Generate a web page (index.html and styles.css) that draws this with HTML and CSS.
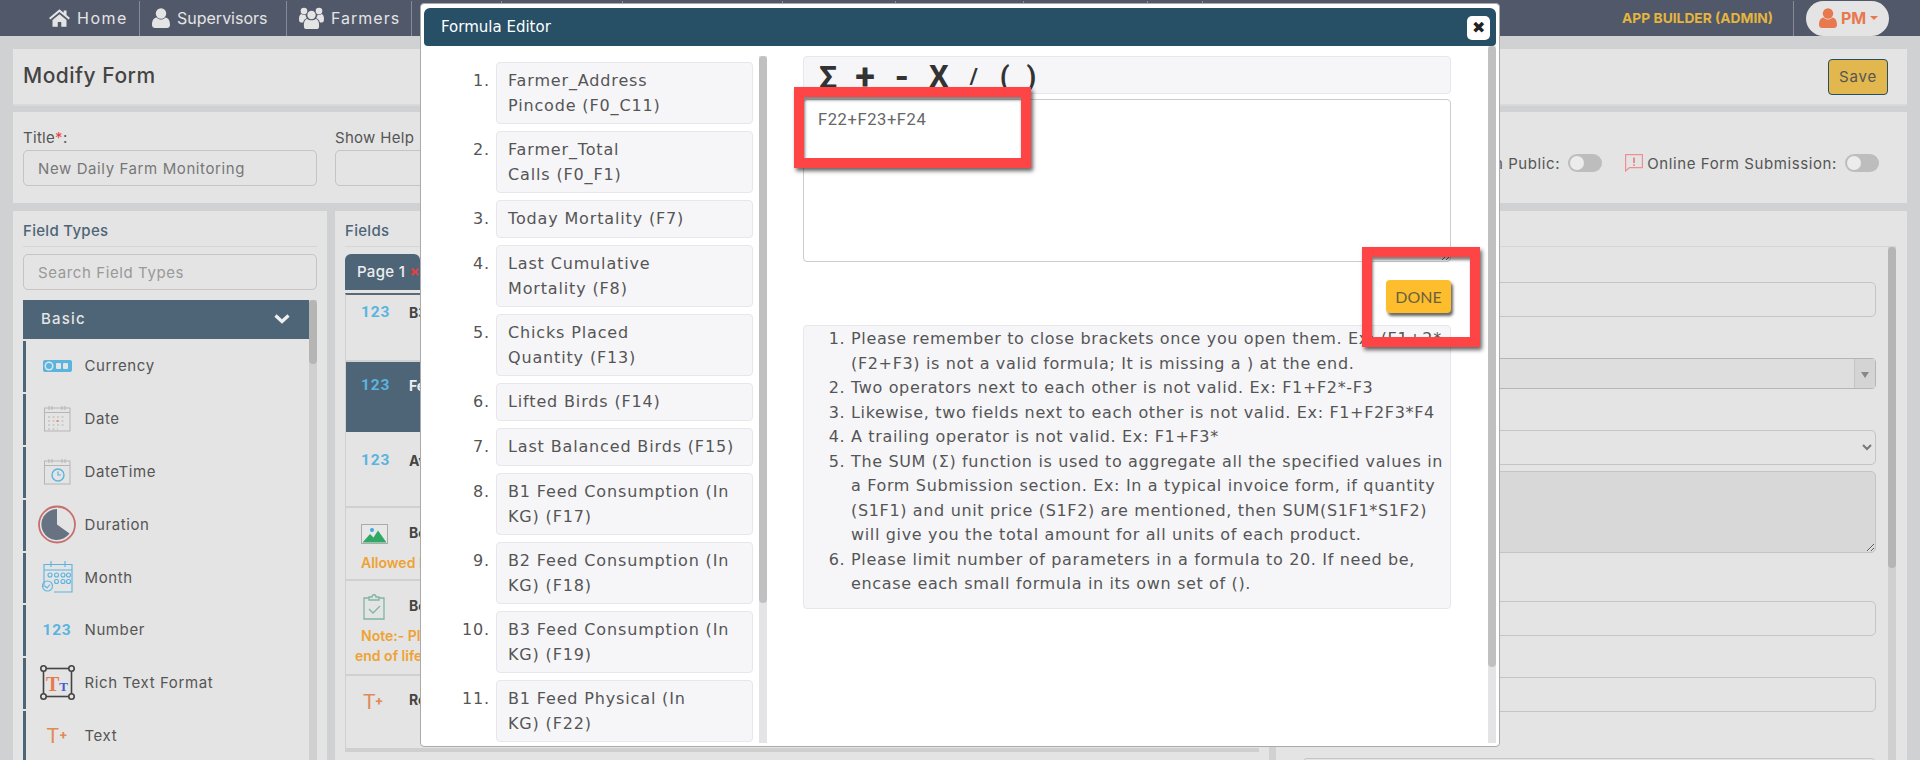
FILE: index.html
```html
<!DOCTYPE html>
<html lang="en">
  <head>
    <meta charset="UTF-8" />
    <title>Modify Form</title>
    <link rel="stylesheet" href="styles.css">
  </head>
  <body>
    <nav class="topbar">
      <a class="navItem navHome">
        <svg class="navIcon" width="21" height="18" viewBox="0 0 24 20"><path d="M12 0 0 10l1.6 1.8L12 3.2l10.4 8.6L24 10l-4-3.4V1.400h-3.200v2.500z"/><path d="M4 12.400 12 5.700l8 6.700V20h-6v-5.500h-4V20H4z"/></svg>
        Home
      </a>
      <a class="navItem navSupervisors">
        <svg class="navIcon" width="18" height="20" viewBox="0 0 18 20"><circle cx="9" cy="5.500" r="5.200"/><path d="M0 17c0-5 2-7 4.500-7.500C6 11 7.500 11.500 9 11.500s3-.5 4.500-2C16 10 18 12 18 17c0 2-1.500 3-3 3H3c-1.500 0-3-1-3-3z"/></svg>
        Supervisors
      </a>
      <a class="navItem navFarmers">
        <svg class="navIcon" width="25" height="22" viewBox="0 0 25 22"><circle cx="12.500" cy="8" r="4.200"/><circle cx="5" cy="4" r="3.300"/><circle cx="20" cy="4" r="3.300"/><path d="M5 20c-.5-5 1-7.500 3-8.300 2.500 2 6.500 2 9 0 2 .8 3.500 3.300 3 8.300-.2 1.400-1 2-2 2H7c-1 0-1.800-.6-2-2z"/><path d="M0 12c0-3 1-4.500 2.500-5 1.300 1 3 1 4 .5 0 1.500.6 2.800 1.500 3.600-2 .8-3.500 2.400-3.800 4.400H2c-1.200 0-2-1-2-3.500zM25 12c0-3-1-4.500-2.500-5-1.300 1-3 1-4 .5 0 1.500-.6 2.800-1.500 3.600 2 .8 3.500 2.400 3.800 4.400H23c1.200 0 2-1 2-3.500z"/></svg>
        Farmers
      </a>
      <span class="navItem navGap1"></span>
      <span class="navItem navGap2"></span>
      <span class="navItem navGap3"></span>
      <span class="navItem navGap4"></span>
      <span class="navItem navGap5"></span>
      <span class="navItem navGap6"></span>
      <span class="navItem navGap7"></span>
      <span class="navRole">APP BUILDER (ADMIN)</span>
      <a class="navUser">
        <svg width="18" height="20" viewBox="0 0 18 20"><circle cx="9" cy="5.500" r="5.200"/><path d="M0 17c0-5 2-7 4.500-7.500C6 11 7.500 11.500 9 11.500s3-.5 4.500-2C16 10 18 12 18 17c0 2-1.500 3-3 3H3c-1.500 0-3-1-3-3z"/></svg>
        <span>PM</span><i class="caret"></i>
      </a>
    </nav>

    <main class="page">
      <section class="card cardHead">
        <h1>Modify Form</h1>
        <button class="btnSave">Save</button>
      </section>

      <section class="card cardMeta">
        <div class="metaField">
          <label>Title<span class="req">*</span>:</label>
          <input class="input" type="text" value="New Daily Farm Monitoring" />
        </div>
        <div class="metaField">
          <label>Show Help</label>
          <input class="input" type="text" />
        </div>
        <div class="metaToggles">
          <span>Open in Public:</span><i class="toggle"></i>
          <svg class="warnIcon" width="18" height="18" viewBox="0 0 18 18"><path d="M.6 .6h16.800v13H4.500L.6 17z" fill="none" stroke="#ef8f8f" stroke-width="1.200"/><path d="M8.300 3.500h1.400v5.500H8.300zM8.300 10.200h1.400v1.500H8.300z" fill="#e86a6a"/></svg>
          <span>Online Form Submission:</span><i class="toggle"></i>
        </div>
      </section>

      <div class="columns">
        <section class="panel panelTypes">
          <h2>Field Types</h2>
          <input class="input" type="text" placeholder="Search Field Types" />
          <div class="typesWrap">
            <div class="typesList">
              <div class="typesHead">
                <span>Basic</span>
                <svg width="16" height="11" viewBox="0 0 16 11"><path d="M1.500 2.500 8 8.500l6.500-6" fill="none" stroke="#f0f0f0" stroke-width="3.200"/></svg>
              </div>
              <div class="typeRow">
                <span class="typeIcon"><svg width="29" height="13" viewBox="0 0 29 13"><rect x="0" y="1" width="29" height="12" rx="2" fill="#5ab4e0"/><circle cx="6" cy="7" r="4.500" fill="#e4e4e4"/><circle cx="6" cy="7" r="3" fill="#5ab4e0"/><rect x="13" y="4" width="5" height="6" rx="1" fill="#e4e4e4"/><rect x="20" y="4" width="5" height="6" rx="1" fill="#e4e4e4"/></svg></span>
                Currency
              </div>
              <div class="typeRow">
                <span class="typeIcon"><svg width="27" height="27" viewBox="0 0 27 27" fill="none"><rect x=".5" y="3" width="25.500" height="23" stroke="#b5b5b5"/><path d="M.5 7.500h25.500M5 1v4M8 1v4M18 1v4M21 1v4" stroke="#b5b5b5"/><path d="M4 12h18M4 16h18M4 20h18M4 24h10" stroke="#c4c4c4" stroke-width="1.400" stroke-dasharray="2 2.500"/><path d="M12.500 15.300h2v1.500h-2z" fill="#e8784e"/></svg></span>
                Date
              </div>
              <div class="typeRow">
                <span class="typeIcon"><svg width="27" height="27" viewBox="0 0 27 27" fill="none"><rect x=".5" y="3" width="25.500" height="23" stroke="#b5b5b5"/><path d="M.5 7.500h25.500M5 1v4M8 1v4M18 1v4M21 1v4" stroke="#b5b5b5"/><circle cx="14" cy="17" r="6" stroke="#5ab4e0" stroke-width="1.400"/><path d="M14 13.500V17h3" stroke="#5ab4e0" stroke-width="1.200"/></svg></span>
                DateTime
              </div>
              <div class="typeRow">
                <span class="typeIcon"><svg width="38" height="39" viewBox="0 0 38 39"><circle cx="19" cy="19.500" r="18" fill="#e4e4e4" stroke="#c76f6f" stroke-width="1.800"/><path d="M19 4a15.500 15.500 0 1 0 12.500 24.500L19 19.500z" fill="#677283"/></svg></span>
                Duration
              </div>
              <div class="typeRow">
                <span class="typeIcon"><svg width="33" height="34" viewBox="0 0 33 34" fill="none" stroke="#5ab4e0" stroke-width="1.100"><path d="M3 27V4.500h28V32H13"/><path d="M3 10h28M10 1v6M24 1v6"/><circle cx="9" cy="15" r="2"/><circle cx="15.500" cy="15" r="2"/><circle cx="22" cy="15" r="2"/><circle cx="27.500" cy="15" r="2"/><circle cx="15.500" cy="21.500" r="2"/><circle cx="22" cy="21.500" r="2"/><circle cx="27.500" cy="21.500" r="2"/><circle cx="6.500" cy="26" r="5"/><path d="m4 26 2 2 3-3.500"/></svg></span>
                Month
              </div>
              <div class="typeRow">
                <span class="typeIcon"><span class="num123">123</span></span>
                Number
              </div>
              <div class="typeRow">
                <span class="typeIcon">
                  <svg width="35" height="35" viewBox="0 0 35 35" fill="none" stroke="#444" stroke-width="1.600"><rect x="3.500" y="3.500" width="28" height="28"/><circle cx="3.500" cy="3.500" r="2.700" fill="#e4e4e4"/><circle cx="31.500" cy="3.500" r="2.700" fill="#e4e4e4"/><circle cx="3.500" cy="31.500" r="2.700" fill="#e4e4e4"/><circle cx="31.500" cy="31.500" r="2.700" fill="#e4e4e4"/></svg>
                  <span class="richLetters"><span class="richT1">T</span><span class="richT2">T</span></span>
                </span>
                Rich Text Format
              </div>
              <div class="typeRow">
                <span class="typeIcon"><span class="tPlus">T<small>+</small></span></span>
                Text
              </div>
            </div>
            <div class="scrollbar scrollTypes"><i></i></div>
          </div>
        </section>

        <section class="panel panelFields">
          <h2>Fields</h2>
          <div class="pageTab">Page 1 <b>×</b></div>
          <div class="fieldList">
            <div class="fieldRow fieldRow1"><span class="num123">123</span><b>B3 Feed</b></div>
            <div class="fieldRow fieldRow2 selected"><span class="num123">123</span><b>Feed</b></div>
            <div class="fieldRow fieldRow3"><span class="num123">123</span><b>Avg</b></div>
            <div class="fieldRow fieldRow4">
              <svg width="27" height="20" viewBox="0 0 27 20"><rect x=".5" y=".5" width="26" height="19" fill="#e8e8e8" stroke="#aaa"/><circle cx="11" cy="6" r="2" fill="#3fa8dc"/><path d="M1.500 18.500 9 10l3.500 3.500L17 6.500l8.500 12z" fill="#31a865"/></svg>
              <b>Bo</b>
              <p class="fieldNote">Allowed File Types</p>
            </div>
            <div class="fieldRow fieldRow5">
              <svg class="clipIcon" width="22" height="26" viewBox="0 0 22 26" fill="none" stroke="#7fb5a3" stroke-width="1.300"><path d="M6 4H1v21h20V4h-5"/><path d="M6 6V3h3c0-3 4-3 4 0h3v3z"/><path d="m6 15 4 4 7-7"/></svg>
              <b>Bo</b>
              <p class="fieldNote">Note:- Please<br><span class="noteOut">end of life</span></p>
            </div>
            <div class="fieldRow fieldRow6"><span class="tPlus tPlusField">T<small>+</small></span><b>Re</b></div>
          </div>
        </section>

        <section class="panel panelProps">
          <div class="propsWrap">
            <div class="propsForm">
              <input class="input propA" type="text" />
              <div class="selectBox propB"><i></i></div>
              <select class="input propC"><option></option></select>
              <textarea class="input propD"></textarea>
              <input class="input propE" type="text" />
              <input class="input propF" type="text" />
              <input class="input propG" type="text" />
            </div>
            <div class="scrollbar scrollProps"><i></i></div>
          </div>
        </section>
      </div>
    </main>

    <div class="modal">
      <header class="modalHead">
        <span>Formula Editor</span>
        <button class="btnClose">✖</button>
      </header>
      <div class="modalBody">
        <div class="fieldPicker">
          <ol class="pickList">
            <li>Farmer_Address<br>Pincode (F0_C11)</li>
            <li>Farmer_Total<br>Calls (F0_F1)</li>
            <li>Today Mortality (F7)</li>
            <li>Last Cumulative<br>Mortality (F8)</li>
            <li>Chicks Placed<br>Quantity (F13)</li>
            <li>Lifted Birds (F14)</li>
            <li>Last Balanced Birds (F15)</li>
            <li>B1 Feed Consumption (In<br>KG) (F17)</li>
            <li>B2 Feed Consumption (In<br>KG) (F18)</li>
            <li>B3 Feed Consumption (In<br>KG) (F19)</li>
            <li>B1 Feed Physical (In<br>KG) (F22)</li>
          </ol>
          <div class="scrollbar scrollPicker"><i></i></div>
        </div>
        <div class="editor">
          <div class="opsBar">
            <span class="opSigma">Σ</span><span class="opBig">+</span><span class="opBig">-</span><span class="opX">X</span><span class="opSlash">/</span><span class="opOpen">(</span><span>)</span>
          </div>
          <textarea class="formulaBox">F22+F23+F24</textarea>
          <div class="doneRow"><button class="btnDone">DONE</button></div>
          <ol class="notes">
            <li>Please remember to close brackets once you open them. Ex: (F1+2*<br>(F2+F3) is not a valid formula; It is missing a ) at the end.</li>
            <li>Two operators next to each other is not valid. Ex: F1+F2*-F3</li>
            <li>Likewise, two fields next to each other is not valid. Ex: F1+F2F3*F4</li>
            <li>A trailing operator is not valid. Ex: F1+F3*</li>
            <li>The SUM (Σ) function is used to aggregate all the specified values in<br>a Form Submission section. Ex: In a typical invoice form, if quantity<br>(S1F1) and unit price (S1F2) are mentioned, then SUM(S1F1*S1F2)<br>will give you the total amount for all units of each product.</li>
            <li>Please limit number of parameters in a formula to 20. If need be,<br>encase each small formula in its own set of ().</li>
          </ol>
        </div>
        <div class="scrollbar scrollEditor"><i></i></div>
      </div>
    </div>

    <!-- red marks from the screenshot annotation -->
    <div class="redMark redFormula"></div>
    <div class="redMark redDone"></div>
  </body>
</html>
```

FILE: styles.css
```css
html, body {
  margin: 0;
  height: 760px;
  overflow: hidden;
}
body {
  position: relative;
  background: #d0d1d3;
  font-family: 'Inter', sans-serif;
  font-size: 14px;
  color: #555;
}
/* top bar */
.topbar {
  display: flex;
  align-items: center;
  height: 36px;
  padding-left: 37px;
  background: #515869;
  color: #e4e4e4;
}
.navItem {
  display: flex;
  align-items: center;
  gap: 7px;
  height: 35px;
  box-sizing: border-box;
  padding: 0 12px;
  border-right: 1px solid #868b97;
  font-size: 16px;
}
.navIcon { fill: #e4e4e4; flex: none; }
.navHome { width: 103px; letter-spacing: 1.500px; }
.navSupervisors { width: 147px; }
.navFarmers { width: 125px; letter-spacing: 1px; }
.navGap1 { width: 90px; }
.navGap2 { width: 121px; }
.navGap3 { width: 160px; }
.navGap4 { width: 113px; }
.navGap5 { width: 128px; }
.navGap6 { width: 124px; }
.navGap7 { width: 55px; }
.navRole {
  margin-left: auto;
  padding-right: 20px;
  border-right: 1px solid #868b97;
  height: 35px;
  line-height: 35px;
  font-weight: 700;
  font-size: 13.800px;
  color: #e4b53e;
}
.navUser {
  display: flex;
  align-items: center;
  gap: 4px;
  box-sizing: border-box;
  width: 83px;
  height: 35px;
  margin: 0 31px 0 12px;
  padding-left: 13px;
  border-radius: 18px;
  background: #e4e4e4;
  color: #e8784e;
  font-weight: 700;
  font-size: 16px;
}
.navUser svg { fill: #e8784e; }
.caret {
  border-top: 4px solid #e8784e;
  border-left: 4px solid transparent;
  border-right: 4px solid transparent;
}
/* page */
.page {
  padding: 13px 13px 0;
}
.card, .panel {
  background: #e4e4e4;
  box-sizing: border-box;
}
.cardHead {
  display: flex;
  justify-content: space-between;
  align-items: center;
  height: 55px;
  padding: 0 19px 0 10px;
  box-shadow: 0 2px 0 #d9d9d9;
}
h1 {
  margin: 0 0 2px;
  font-size: 21px;
  font-weight: 500;
  letter-spacing: .5px;
  color: #444;
}
.btnSave {
  width: 60px;
  height: 36px;
  border: 1px solid #274f66;
  border-radius: 4px;
  background: #e2b84e;
  color: #555;
  font: 15px 'Inter', sans-serif;
  letter-spacing: .8px;
}
.cardMeta {
  display: flex;
  gap: 18px;
  height: 91px;
  margin-top: 8px;
  padding: 16px 10px 0;
}
.metaField {
  width: 294px;
}
.metaField label {
  display: block;
  height: 22px;
  line-height: 20px;
  font-size: 15px;
  letter-spacing: .3px;
  white-space: nowrap;
}
.req { color: #e84040; }
.input {
  box-sizing: border-box;
  display: block;
  width: 100%;
  height: 36px;
  padding: 0 14px;
  border: 1px solid #c4c4c4;
  border-radius: 5px;
  background: #e4e4e4;
  font: 15px 'Inter', sans-serif;
  letter-spacing: .6px;
  color: #777;
  outline: none;
}
.input::placeholder { color: #999; }
.metaToggles {
  display: flex;
  align-items: center;
  margin-left: auto;
  height: 18px;
  margin-top: 26px;
  padding-right: 18px;
  font-size: 15px;
  letter-spacing: .6px;
  white-space: nowrap;
}
.toggle {
  position: relative;
  display: block;
  width: 34px;
  height: 18px;
  margin-left: 8px;
  border-radius: 9px;
  background: #bdbdbd;
}
.toggle::before {
  content: "";
  position: absolute;
  left: 2px;
  top: 2px;
  width: 14px;
  height: 14px;
  border-radius: 50%;
  background: #ececec;
}
.warnIcon { margin: 0 4px 0 23px; flex: none; }
.columns {
  display: flex;
  gap: 8px;
  margin-top: 8px;
  height: 549px;
}
.panel {
  padding: 8px 10px 0;
  overflow: hidden;
}
.panel h2 {
  margin: 0 0 7px;
  padding: 1px 0 4px;
  height: 22px;
  line-height: 22px;
  border-bottom: 1px solid #d6d6d6;
  font-size: 15px;
  font-weight: 500;
  letter-spacing: .3px;
  color: #4d6577;
}
.panelTypes { width: 314px; flex: none; }
.panelFields { width: 934px; flex: none; }
.panelProps { flex: 1; padding: 35px 11px 0 0; margin-left: -1px; }
/* fake scrollbars, same as the page's thin webkit ones */
.scrollbar {
  flex: none;
  width: 8px;
  background: #d0d0d0;
}
.scrollbar i {
  display: block;
  width: 100%;
  border-radius: 0 0 4px 4px;
  background: #b5b5b5;
}
.typesWrap {
  display: flex;
  margin-top: 10px;
}
.typesList { flex: 1; }
.typesHead {
  display: flex;
  justify-content: space-between;
  align-items: center;
  box-sizing: border-box;
  height: 39px;
  padding: 0 19px 2px 18px;
  background: #4d6577;
  color: #e4e4e4;
  font-size: 15px;
  font-weight: 500;
  letter-spacing: 1.200px;
}
.typeRow {
  display: flex;
  align-items: center;
  gap: 4.500px;
  box-sizing: border-box;
  height: 50.900px;
  margin-top: 2px;
  padding: 0 0 2px 8px;
  border-left: 3px solid #4d6577;
  font-size: 15px;
  letter-spacing: .6px;
  color: #555;
}
.typeIcon {
  position: relative;
  display: flex;
  justify-content: center;
  align-items: center;
  width: 46px;
}
.num123 {
  font: 700 15.500px 'Roboto', sans-serif;
  color: #5ab4e0;
  letter-spacing: .8px;
}
.tPlus {
  font: 400 21px 'Roboto', sans-serif;
  color: #e08a55;
}
.tPlus small {
  font-size: 13px;
  font-weight: 700;
  vertical-align: 3px;
}
.richLetters {
  position: absolute;
  left: 12px;
  top: 8px;
  display: flex;
  align-items: baseline;
  font-family: 'Liberation Serif', serif;
  font-weight: 700;
  letter-spacing: 0;
}
.richT1 { font-size: 20px; color: #e8784e; }
.richT2 { font-size: 13px; color: #3f5fcf; }
.scrollTypes { height: 460px; }
.scrollTypes i { height: 64px; border-radius: 4px; }
.pageTab {
  width: 75px;
  height: 36px;
  box-sizing: border-box;
  padding-left: 12px;
  line-height: 36px;
  border-radius: 6px 6px 0 0;
  background: #4d6577;
  color: #eee;
  font-size: 15px;
  font-weight: 500;
  letter-spacing: .3px;
  white-space: nowrap;
}
.pageTab b { color: #e84040; }
.fieldList {
  margin-top: 3px;
  border-top: 2px solid #5c6a75;
  border-left: 1px solid #d0d0d0;
  border-bottom: 4px solid #cfcfcf;
}
.fieldRow {
  position: relative;
  box-sizing: border-box;
  padding: 14px 0 0 15px;
  border-bottom: 2px solid #d0d0d0;
}
.fieldRow b {
  position: absolute;
  left: 63px;
  top: 14px;
  line-height: 20px;
  font-size: 14px;
  color: #444;
}
.fieldRow1 { height: 67px; padding-top: 8px; }
.fieldRow1 b { top: 8px; }
.fieldRow2 { height: 72px; }
.fieldRow3 { height: 74px; padding-top: 17px; }
.fieldRow3 b { top: 17px; }
.fieldRow4 { height: 73px; padding-top: 16px; }
.fieldRow4 b { top: 15px; }
.fieldRow4 .fieldNote { margin-top: 6px; }
.fieldRow5 { height: 95px; padding-top: 13px; }
.fieldRow5 b { top: 15px; }
.fieldRow6 { height: 72px; border-bottom: 0; }
.selected { background: #4d6577; border-bottom-color: #e4e4e4; }
.selected b { color: #eee; }
.fieldNote {
  margin: 3px 0 0;
  font-size: 14px;
  font-weight: 600;
  line-height: 20px;
  color: #eea233;
}
.clipIcon { margin-left: 2px; }
.noteOut { margin-left: -6px; }
.tPlusField { margin-left: 2px; }
.propsWrap {
  display: flex;
  gap: 12px;
  margin-top: 0;
  border-top: 1px solid #d6d6d6;
}
.propsForm { flex: 1; padding-left: 26px; }
.scrollProps { height: 514px; margin-top: 0; }
.scrollProps i { height: 321px; border-radius: 4px; }
.panelProps { padding-top: 35px; }
.propsForm { padding-top: 35px; }
.propA, .propE, .propF, .propG { height: 35px; }
.selectBox {
  position: relative;
  box-sizing: border-box;
  height: 31px;
  margin-top: 41px;
  border: 1px solid #b5b5b5;
  border-radius: 4px;
  background: #dedede;
}
.selectBox i {
  position: absolute;
  right: 0;
  top: 0;
  bottom: 0;
  width: 20px;
  border-left: 1px solid #c4c4c4;
  background: #d4d4d4;
}
.selectBox i::after {
  content: "";
  position: absolute;
  left: 6px;
  top: 13px;
  border-top: 6px solid #888;
  border-left: 4px solid transparent;
  border-right: 4px solid transparent;
}
.propC { margin-top: 41px; height: 35px; }
.propD { margin-top: 6px; height: 82px; background: #d8d8d8; }
.propE { margin-top: 48px; }
.propF { margin-top: 41px; }
.propG { margin-top: 46px; }
/* modal */
.modal {
  position: absolute;
  left: 420px;
  top: 3px;
  width: 1080px;
  height: 744px;
  box-sizing: border-box;
  padding: 4px 3px 3px;
  background: #fff;
  border: 1px solid #aaa;
  border-radius: 4px;
  font-family: 'DejaVu Sans', sans-serif;
  font-size: 16px;
  color: #555;
}
.modalHead {
  display: flex;
  justify-content: space-between;
  align-items: center;
  height: 38px;
  padding: 0 6px 0 17px;
  border-radius: 6px 6px 4px 4px;
  background: #274f66;
  color: #fff;
  font-size: 15px;
  font-weight: 500;
}
.btnClose {
  width: 23px;
  height: 24px;
  margin-top: 2px;
  padding: 0;
  border: 0;
  border-radius: 5px;
  background: #fff;
  color: #222;
  font-size: 16px;
  line-height: 24px;
}
.modalBody {
  display: flex;
  height: 697px;
  overflow: hidden;
}
.fieldPicker {
  display: flex;
  flex: none;
  width: 343px;
  padding-top: 10px;
  box-sizing: border-box;
}
.pickList {
  flex: 1;
  margin: 6px 6px 0 0;
  padding: 0 0 0 72px;
  list-style: decimal;
  letter-spacing: .85px;
}
.pickList li {
  box-sizing: border-box;
  min-height: 38px;
  margin-bottom: 7px;
  padding: 6px 11px 5px;
  line-height: 24.500px;
  border: 1px solid #e6e6ec;
  border-radius: 4px;
  background: #f6f6f9;
  white-space: nowrap;
}
.scrollPicker {
  height: 687px;
  background: #e4e4e7;
}
.scrollPicker i { height: 547px; background: #c0c0c0; border-radius: 4px; }
.editor {
  flex: 1;
  padding: 10px 37px 0 36px;
  min-width: 0;
}
.opsBar {
  box-sizing: border-box;
  display: flex;
  align-items: center;
  height: 38px;
  padding: 3px 0 0 15px;
  border: 1px solid #e6e6ec;
  border-radius: 4px;
  background: #f6f6f9;
  color: #333;
  font: 700 28px 'Roboto', sans-serif;
}
.opsBar span { margin-right: 20px; }
.opsBar .opSigma { font-size: 32px; margin-right: 18px; }
.opsBar .opBig { font-size: 36px; }
.opsBar .opX { font-size: 31px; margin-right: 21px; }
.opsBar .opSlash { font-size: 22px; margin-right: 22px; }
.opsBar .opOpen { margin-right: 17px; }
.formulaBox {
  display: block;
  box-sizing: border-box;
  width: 100%;
  height: 163px;
  margin-top: 5px;
  padding: 10px 14px;
  border: 1px solid #ccc;
  border-radius: 4px;
  font: 16.500px 'Roboto', sans-serif;
  letter-spacing: .6px;
  color: #666;
  outline: none;
}
.doneRow {
  display: flex;
  justify-content: flex-end;
  height: 63px;
  align-items: flex-end;
  padding-bottom: 12px;
  box-sizing: border-box;
}
.btnDone {
  width: 65px;
  height: 33px;
  border: 0;
  border-radius: 4px;
  background: #fdbd2d;
  box-shadow: 2px 3px 3px rgba(0,0,0,.6);
  color: #6b6040;
  font: 16px 'Lato', sans-serif;
}
.notes {
  margin: 0;
  padding: 1px 4px 11px 47px;
  line-height: 24.500px;
  border: 1px solid #e6e6ec;
  border-radius: 4px;
  background: #f6f6f9;
  letter-spacing: .65px;
  white-space: nowrap;
  overflow: hidden;
}
.scrollEditor {
  height: 697px;
  background: #e4e4e7;
}
.scrollEditor i { height: 621px; background: #c0c0c0; border-radius: 4px; }
/* annotation */
.redMark {
  position: absolute;
  box-sizing: border-box;
  border: 10px solid #fe4444;
  box-shadow: 2px 3px 4px rgba(0,0,0,.6), inset 1px 3px 3px rgba(0,0,0,.5);
}
.redFormula {
  left: 794px;
  top: 87px;
  width: 237px;
  height: 81px;
}
.redDone {
  left: 1362px;
  top: 247px;
  width: 118px;
  height: 100px;
}
```
